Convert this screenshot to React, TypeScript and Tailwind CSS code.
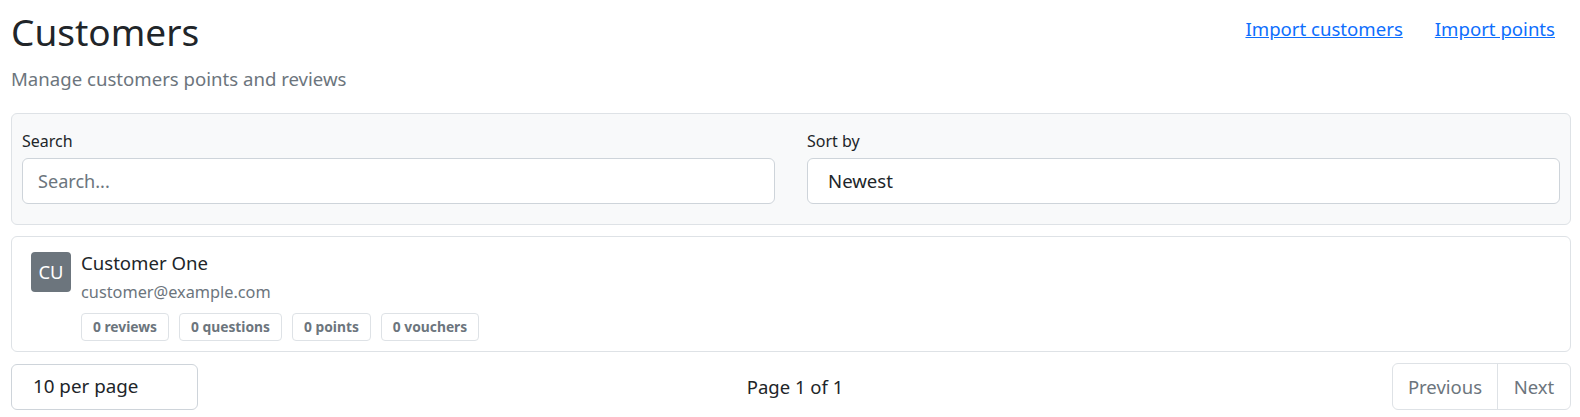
import { useState } from "react";

const STATS = ["0 reviews", "0 questions", "0 points", "0 vouchers"];

export default function App() {
  const [query, setQuery] = useState("");

  return (
    <div className="min-h-screen bg-white pl-[11px] pr-[9px] font-['Noto_Sans',sans-serif] text-[#212529]">
      <div className="flex items-start justify-between">
        <div>
          <h1 className="pt-[10px] text-[37px] leading-[1.2] font-normal">Customers</h1>
          <p className="mt-[11px] text-[18.6px] leading-[1.5] text-[#6c757d]">Manage customers points and reviews</p>
        </div>
        <div className="mt-[15px] flex">
          <a href="#" className="px-4 text-[18.6px] leading-[1.5] text-[#0d6efd] underline">Import customers</a>
          <a href="#" className="px-4 text-[18.6px] leading-[1.5] text-[#0d6efd] underline">Import points</a>
        </div>
      </div>

      <div className="mt-[20px] grid grid-cols-2 gap-8 rounded-md border border-[#dee2e6] bg-[#f8f9fa] px-[10px] pt-[15px] pb-[20px]">
        <div>
          <label className="mb-[5px] block text-[16px] leading-[1.5]">Search</label>
          <input
            value={query}
            onChange={(e) => setQuery(e.target.value)}
            placeholder="Search..."
            className="block h-[46px] w-full rounded-md border border-[#ced4da] bg-white pl-[15px] text-[18.1px] outline-none placeholder:text-[#6c757d]"
          />
        </div>
        <div>
          <label className="mb-[5px] block text-[16px] leading-[1.5]">Sort by</label>
          <select className="block h-[46px] w-full appearance-none rounded-md border border-[#ced4da] bg-white pl-[20px] text-[18.6px] outline-none">
            <option>Newest</option>
            <option>Oldest</option>
          </select>
        </div>
      </div>

      <div className="mt-[11px] rounded-md border border-[#dee2e6] bg-white pl-[19px] pt-[15px] pb-[10px]">
        <div className="flex gap-[10px]">
          <div className="flex h-10 w-10 shrink-0 items-center justify-center rounded bg-[#6c757d] text-[18.4px] text-white">CU</div>
          <div>
            <div className="text-[18.6px] leading-[1.2]">Customer One</div>
            <div className="mt-[5px] text-[16.3px] leading-[1.5] text-[#6c757d]">customer@example.com</div>
            <div className="mt-[9px] flex gap-[10px]">
              {STATS.map((s) => (
                <span key={s} className="flex h-[28px] items-center rounded border border-[#dee2e6] bg-white px-[11px] text-[13.8px] font-bold text-[#6c757d]">
                  {s}
                </span>
              ))}
            </div>
          </div>
        </div>
      </div>

      <div className="mt-[11px] flex items-center justify-between">
        <select className="block h-[46px] w-[187px] appearance-none rounded-md border border-[#ced4da] bg-white pl-[21px] text-[18.8px] outline-none">
          <option>10 per page</option>
          <option>25 per page</option>
          <option>50 per page</option>
        </select>
        <div className="text-[18.5px]">Page 1 of 1</div>
        <div className="flex h-[47px] rounded-md border border-[#dee2e6] text-[18.5px] text-[#6c757d]">
          <button className="w-[105px] border-r border-[#dee2e6]">Previous</button>
          <button className="w-[72px]">Next</button>
        </div>
      </div>
    </div>
  );
}
